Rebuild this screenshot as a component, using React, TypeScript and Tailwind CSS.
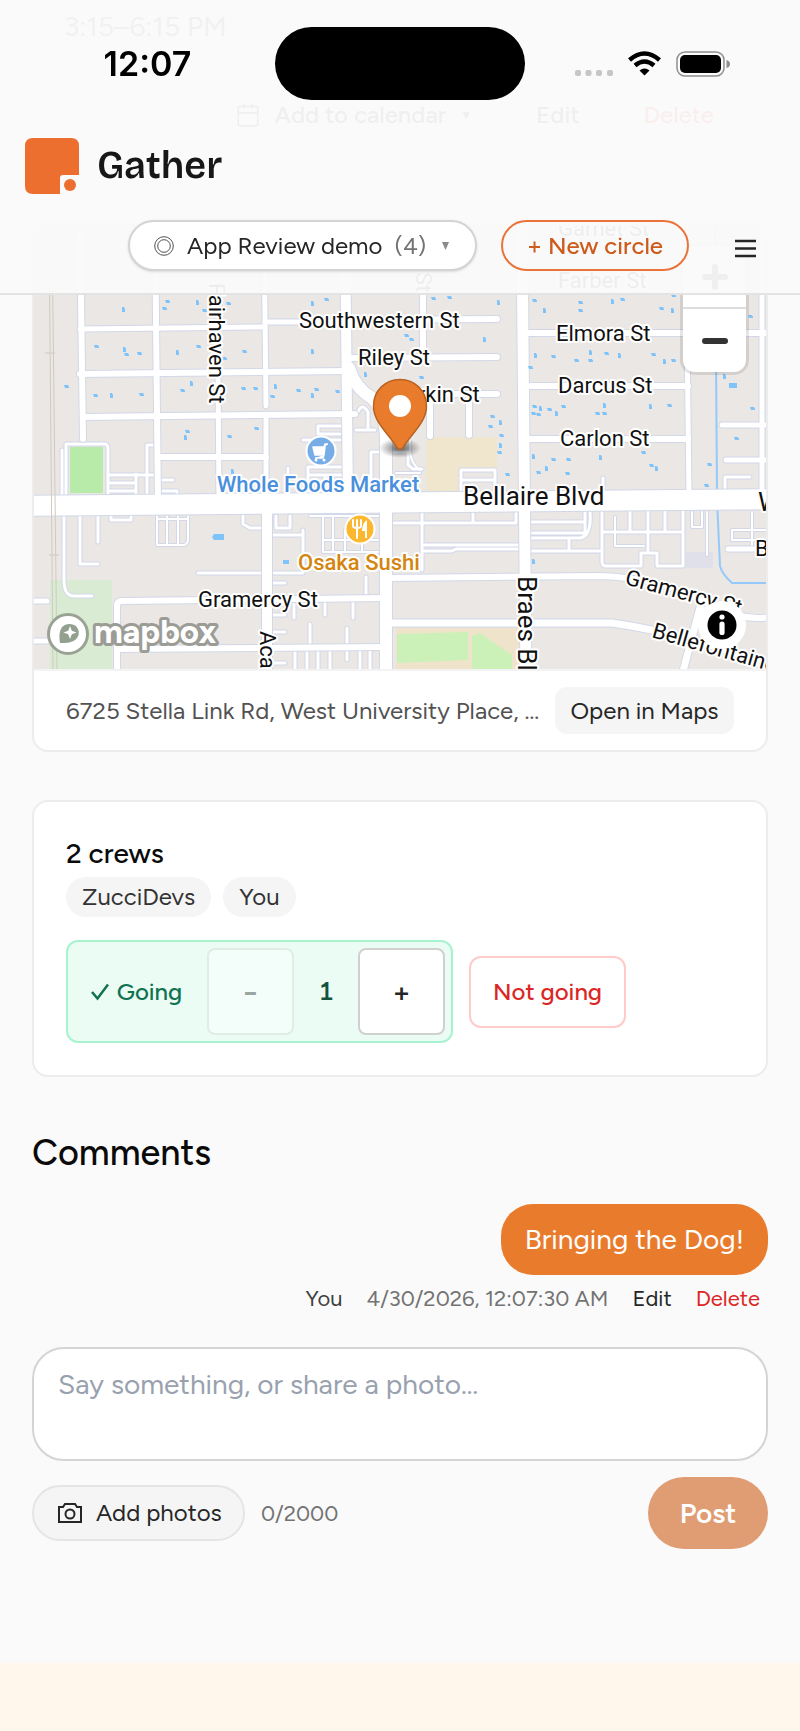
import React, { useState } from "react";
import { Calendar } from "lucide-react";

interface MapLabel {
  text: string;
  x: number;
  y: number;
  size?: number;
  rotate?: number;
  color?: string;
}

interface Road {
  d: string;
  w: number;
}

const MAX_LENGTH = 2000;

const roads: Road[] = [
  { d: "M80 226L83 439", w: 6 },
  { d: "M155 226L158 505", w: 6 },
  { d: "M218 373L219 505", w: 5 },
  { d: "M264 226L266 406", w: 5 },
  { d: "M266 416V505", w: 5 },
  { d: "M345 226L348 500", w: 10 },
  { d: "M80 329L265 327", w: 5 },
  { d: "M265 322H345", w: 5 },
  { d: "M80 374L345 371", w: 6 },
  { d: "M83 417L355 414", w: 6 },
  { d: "M158 457H266", w: 6 },
  { d: "M345 320L497 319", w: 6 },
  { d: "M348 358L497 357", w: 6 },
  { d: "M420 394H497", w: 6 },
  { d: "M423 226V357", w: 6 },
  { d: "M430 394V436", w: 6 },
  { d: "M469 394V435", w: 6 },
  { d: "M349 368Q355 388 372 398Q386 412 386 440V680", w: 12 },
  { d: "M522 226L526 680", w: 11 },
  { d: "M523 333H770", w: 6 },
  { d: "M523 386H688", w: 6 },
  { d: "M523 439H688", w: 6 },
  { d: "M687 333L689 495", w: 5 },
  { d: "M762 226V495", w: 5 },
  { d: "M722 425H766", w: 5 },
  { d: "M726 460H766", w: 5 },
  { d: "M267 510V680", w: 10 },
  { d: "M117 680V606Q117 601 122 601L386 598", w: 6 },
  { d: "M117 649L386 647", w: 6 },
  { d: "M30 601H47", w: 5 },
  { d: "M30 641H47", w: 5 },
  { d: "M386 578L600 576Q660 578 700 600T770 617", w: 6 },
  { d: "M386 623H612Q660 630 700 642T770 668", w: 7 },
  { d: "M702 600L682 675", w: 7 },
  { d: "M728 549H766", w: 5 },
  { d: "M20 506L780 499", w: 20 },
];

const lanes: Road[] = [
  { d: "M64 516V580Q64 596 74 596H92", w: 3 },
  { d: "M80 516V564H98", w: 3 },
  { d: "M98 516V542", w: 3 },
  { d: "M111 516V520H131V516", w: 3 },
  { d: "M157 516V545H183Q188 545 188 538V516M167 516V545M178 516V545M157 519H188", w: 2 },
  { d: "M198 573H303M303 530V573M272 535H303M272 583H285M272 615H285M272 632H285M272 663H285", w: 3 },
  { d: "M243 516V524L250 528H262M276 516V528H290V516", w: 3 },
  { d: "M294 600V618M325 598V615M353 598V618M366 577V598M310 624V647M347 628V660", w: 3 },
  { d: "M295 649V669M307 649V669M318 649V669M330 649V669M360 649V669M370 649V669", w: 3 },
  { d: "M310 516H380M323 516V552H378M333 516V552M345 530V552M362 530V552M323 540H378", w: 2 },
  { d: "M62 496V450M66 444H105Q108 444 108 450V494M66 444V494", w: 3 },
  { d: "M108 475H155M110 483H136M110 491H136M136 474V494M147 495V445H155", w: 3 },
  { d: "M162 480H173M162 491H177V496", w: 3 },
  { d: "M303 440H340M318 426H345M318 426V434H340M288 468V492", w: 3 },
  { d: "M308 467H345M308 475H345M308 467V492M325 475V492", w: 3 },
  { d: "M356 430H375M358 412Q362 402 368 412V430M371 452V492M371 452H380M390 452H408V465L413 469H422", w: 3 },
  { d: "M410 440Q408 462 420 470M396 473H420", w: 2 },
  { d: "M461 490V470H495V490M461 480H495", w: 3 },
  { d: "M603 478V487M725 488V477H750", w: 3 },
  { d: "M392 523H516M422 511V570M473 511V523M516 511V523M422 545H520M422 551H452L456 549H520", w: 3 },
  { d: "M531 522H585M531 533H585M585 511V533M590 511Q592 536 580 538H531M531 551H600M569 540V551", w: 3 },
  { d: "M602 511V562Q602 566 606 566H641V553H657V566H683V511M648 511V553M630 511V531M665 511V531M602 532H683", w: 3 },
  { d: "M615 517V546H644M692 512V527H702V512M707 512V555M752 512V549M766 530H732V540H766", w: 2 },
];

// backyard pools: x, y pairs
const pools: [number, number][] = [
  [123, 310], [164, 309], [167, 302], [197, 303], [204, 311], [228, 304], [312, 304], [326, 300],
  [96, 347], [124, 350], [126, 355], [139, 354], [177, 353], [198, 347], [244, 352], [312, 352],
  [66, 387], [95, 396], [111, 396], [141, 395], [182, 391], [191, 384], [243, 389], [255, 389],
  [275, 387], [272, 397], [298, 391], [312, 396], [316, 390], [337, 392], [365, 375], [224, 359],
  [187, 432], [185, 438], [229, 437], [256, 429], [232, 472], [433, 299], [449, 298], [498, 303],
  [406, 336], [411, 340], [484, 340], [421, 378], [534, 301], [544, 311], [580, 303], [580, 311],
  [612, 302], [622, 300], [661, 309], [672, 311], [750, 317], [673, 296], [535, 356], [553, 357],
  [576, 361], [590, 353], [590, 361], [606, 354], [619, 356], [653, 355], [673, 361], [664, 362],
  [530, 368], [534, 407], [540, 409], [549, 410], [563, 407], [556, 414], [533, 414], [538, 415],
  [604, 406], [597, 414], [604, 414], [650, 407], [669, 406], [492, 417], [500, 423], [490, 427],
  [501, 436], [500, 446], [499, 453], [507, 475], [533, 457], [553, 460], [568, 460], [546, 469],
  [538, 473], [567, 474], [600, 458], [643, 453], [651, 466], [656, 469], [709, 465], [706, 486],
  [724, 377], [752, 409], [736, 439], [533, 562],
];

const labels: MapLabel[] = [
  { text: "Garnet St", x: 558, y: 236 },
  { text: "Farber St", x: 558, y: 288 },
  { text: "Fairhaven St", x: 209, y: 283, rotate: 90 },
  { text: "Southwestern St", x: 299, y: 328 },
  { text: "Riley St", x: 358, y: 365 },
  { text: "Larkin St", x: 394, y: 402 },
  { text: "Elmora St", x: 556, y: 341 },
  { text: "Darcus St", x: 558, y: 393 },
  { text: "Carlon St", x: 560, y: 446 },
  { text: "Bellaire Blvd", x: 463, y: 505, size: 26 },
  { text: "West", x: 758, y: 511, size: 26 },
  { text: "Bellefontaine", x: 755, y: 556 },
  { text: "Gramercy St", x: 198, y: 607 },
  { text: "Academy St", x: 260, y: 631, rotate: 90 },
  { text: "Braes Blvd", x: 518, y: 576, size: 26, rotate: 90 },
  { text: "St", x: 416, y: 272, rotate: 90 },
  { text: "Gramercy St", x: 624, y: 584, rotate: 15 },
  { text: "Bellefontaine St", x: 651, y: 637, rotate: 16 },
  { text: "Whole Foods Market", x: 217, y: 492, color: "#4a90dd" },
  { text: "Osaka Sushi", x: 298, y: 570, color: "#d4850f" },
];

const Roads: React.FC<{ items: Road[]; casing: number }> = ({ items, casing }) => (
  <g fill="none" strokeLinecap="round" strokeLinejoin="round">
    {items.map((road) => (
      <path key={`c-${road.d}`} d={road.d} stroke="#d2d8e8" strokeWidth={road.w + casing} />
    ))}
    {items.map((road) => (
      <path key={road.d} d={road.d} stroke="#fff" strokeWidth={road.w} />
    ))}
  </g>
);

const MapView: React.FC = () => (
  <svg
    viewBox="34 226 732 443"
    preserveAspectRatio="xMidYMid slice"
    className="block h-full w-full"
    role="img"
    aria-label="Map of the event location"
  >
    <rect x="0" y="200" width="820" height="500" fill="#ebe7e4" />
    <rect x="50" y="580" width="62" height="92" fill="#d9ecd3" />
    <rect x="70" y="447" width="33" height="46" fill="#b8eaa9" />
    <path d="M426 437H497V468H461V491H426Z" fill="#f0e6cd" />
    <rect x="396" y="628" width="124" height="44" fill="#f0e3cb" />
    <path d="M397 634L468 632V660L397 663ZM472 636L480 633L512 655V672H472Z" fill="#cbf1b9" />
    <rect x="686" y="552" width="27" height="16" fill="#dfe0ea" />
    <path d="M715 226L717 490M717 500L720 566Q722 574 732 583H770" fill="none" stroke="#93c9fb" strokeWidth="2" />
    <Roads items={lanes} casing={2} />
    <Roads items={roads} casing={2} />
    <g fill="none" stroke="#cfcac0" strokeWidth="1">
      <path d="M49 226L53 669M52 226L57 669" />
      <path d="M45 353H55M49 555H59" />
    </g>
    <g fill="#7fc3fb">
      {pools.map(([x, y], i) => (
        <path
          key={`${x}-${y}`}
          d={i % 3 === 0 ? `M${x - 1} ${y - 3}h2l1 2v3h-3z` : `M${x - 2} ${y - 2}h4l1 2v1h-4z`}
        />
      ))}
      <path d="M214 534H224V540H214L212 537ZM283 560H289V564H283ZM729 383H737V388H729Z" />
    </g>

    <g fontFamily="Roboto, sans-serif" stroke="#fff" strokeWidth="4" strokeLinejoin="round" paintOrder="stroke">
      {labels.map((label) => (
        <text
          key={`${label.text}-${label.x}`}
          x={label.x}
          y={label.y}
          fontSize={label.size ?? 22}
          fontWeight={label.color ? 500 : 400}
          fill={label.color ?? "#111"}
          transform={label.rotate ? `rotate(${label.rotate} ${label.x} ${label.y})` : undefined}
        >
          {label.text}
        </text>
      ))}
    </g>

    {/* shop */}
    <circle cx="321" cy="451" r="14.5" fill="#76ade6" stroke="#fff" strokeWidth="2" />
    <path d="M328 444h-3l-1 3h-11l2 8h9l1-8M324 455l-1 3h-8" fill="#fff" stroke="#fff" strokeWidth="1.5" strokeLinejoin="round" />
    <circle cx="316" cy="460" r="1.5" fill="#fff" />
    <circle cx="324" cy="460" r="1.5" fill="#fff" />

    {/* restaurant */}
    <circle cx="360" cy="529" r="14.5" fill="#fbb72d" stroke="#fff" strokeWidth="2" />
    <path d="M353 520v6q0 2 4 2v10M361 520v6q0 2-4 2M357 520v8" fill="none" stroke="#fff" strokeWidth="2" strokeLinecap="round" />
    <path d="M367 520q-5 3-5 11h3v7h2z" fill="#fff" />

    {/* pin */}
    <defs>
      <radialGradient id="pin-shadow">
        <stop offset="0" stopColor="#000" stopOpacity="0.6" />
        <stop offset="1" stopColor="#000" stopOpacity="0" />
      </radialGradient>
    </defs>
    <ellipse cx="400" cy="448" rx="21" ry="10" fill="url(#pin-shadow)" />
    <path
      d="M400 379.500C385 379.500 373.500 391 373.500 406C373.500 422 388 433 397 447.500Q400 451 403 447.500C412 433 426.500 422 426.500 406C426.500 391 415 379.500 400 379.500Z"
      fill="#e97c2c"
      stroke="#b9621f"
      strokeWidth="1.5"
    />
    <circle cx="400" cy="406" r="11" fill="#fff" />
  </svg>
);

const StatusBar: React.FC = () => (
  <div className="grid h-[100px] grid-cols-[1fr_250px_1fr] items-end">
    <div className="flex h-[73px] items-center justify-center pl-5 font-[Inter,sans-serif] text-[34px] font-semibold text-black">
      12:07
    </div>
    <div className="h-[73px] rounded-full bg-black" />
    <div className="flex h-[73px] items-center justify-center gap-[15px] pr-5">
      <svg width="38" height="26" viewBox="0 0 38 26" fill="#c6c6c8">
        <rect x="0" y="19" width="6" height="6" rx="2" />
        <rect x="10.500" y="19" width="6" height="6" rx="2" />
        <rect x="21" y="19" width="6" height="6" rx="2" />
        <rect x="32" y="19" width="6" height="6" rx="2" />
      </svg>
      <svg width="33" height="25" viewBox="0 0 33 25">
        <path d="M1.500 9Q16.500-4 31.500 9" fill="none" stroke="#000" strokeWidth="4.500" />
        <path d="M7 14.500Q16.500 6.500 26 14.500" fill="none" stroke="#000" strokeWidth="4.500" />
        <path d="M11.500 19.500Q16.500 15.500 21.500 19.500L16.500 24.500Z" />
      </svg>
      <svg width="55" height="26" viewBox="0 0 55 26">
        <rect x="1" y="1" width="47" height="24" rx="8" fill="none" stroke="#8e8e90" strokeWidth="1.500" />
        <rect x="4" y="4" width="41" height="18" rx="5" />
        <path d="M50.500 9Q54 10 54 13T50.500 17Z" fill="#8e8e90" />
      </svg>
    </div>
  </div>
);

const Header: React.FC = () => (
  <header className="fixed inset-x-0 top-0 z-20 h-[295px] border-b-2 border-[#e3e3e3] bg-[#fafafa]/95">
    <StatusBar />
    <a href="#home" className="mt-[37px] ml-[25px] flex h-[58px] w-fit items-center gap-[18px]">
      <svg width="54" height="56" viewBox="0 0 54 56" fill="#ed6f2f">
        <path d="M8 0H46Q54 0 54 8V37H38Q35 37 35 40V56H8Q0 56 0 48V8Q0 0 8 0Z" />
        <circle cx="45" cy="47" r="6" />
      </svg>
      <span className="font-['Bricolage_Grotesque',Inter,sans-serif] text-[38px] leading-[56px] font-semibold text-[#171717]">
        Gather
      </span>
    </a>
    <div className="mt-[25px] flex items-center justify-end pr-11 text-[24px]">
      <button
        type="button"
        className="flex h-[51px] w-[349px] items-center rounded-full border-2 border-[#d4d4d4] bg-white pl-6 text-[#262626] shadow-sm"
      >
        <svg width="20" height="20" viewBox="0 0 20 20" fill="none" stroke="#525252" strokeWidth="1">
          <circle cx="10" cy="10" r="9.300" />
          <circle cx="10" cy="10" r="6.300" />
        </svg>
        <span className="ml-[13px]">App Review demo</span>
        <span className="ml-3 text-[#737373]">(4)</span>
        <svg className="ml-4" width="7" height="8" viewBox="0 0 7 8" fill="#8a8a8a">
          <path d="M0 0H7L3.500 8Z" />
        </svg>
      </button>
      <button
        type="button"
        className="ml-6 h-[51px] w-[188px] rounded-full border-2 border-[#ea7339] font-medium text-[#cc5b1c]"
      >
        + New circle
      </button>
      <button type="button" aria-label="Menu" className="ml-[46px]">
        <svg width="21" height="24" viewBox="0 0 21 24" stroke="#262626" strokeWidth="2.500">
          <path d="M0 7H21M0 14.500H21M0 22H21" />
        </svg>
      </button>
    </div>
  </header>
);

const EventCard: React.FC = () => (
  <section className="h-44 rounded-b-3xl bg-[#f1f1f1] px-8">
    <p className="pt-2 text-[28px] leading-[36px] text-[#525252]">3:15–6:15 PM</p>
    <div className="mt-[45px] flex justify-end gap-[22px] text-[24px] font-medium text-[#262626]">
      <button type="button" className="flex h-[51px] items-center gap-[14px] rounded-xl bg-white px-[22px]">
        <Calendar size={26} strokeWidth={1.5} />
        Add to calendar
        <span className="text-[12px]">▼</span>
      </button>
      <button type="button" className="h-[51px] rounded-xl bg-white px-5">
        Edit
      </button>
      <button type="button" className="h-[51px] rounded-xl bg-white px-[22px] text-[#dc2626]">
        Delete
      </button>
    </div>
  </section>
);

const LocationCard: React.FC = () => (
  <section className="mt-12 overflow-hidden rounded-2xl border-2 border-[#ececec] bg-white">
    <div className="relative h-[443px]">
      <MapView />
      <div className="absolute top-5 right-5 flex flex-col rounded-xl bg-white shadow-[0_0_0_3px_rgba(0,0,0,0.1)]">
        <button type="button" aria-label="Zoom in" className="flex h-[63px] w-[63px] items-center justify-center border-b-2 border-[#ddd]">
          <svg width="26" height="26" viewBox="0 0 26 26" stroke="#333" strokeWidth="6" strokeLinecap="round">
            <path d="M3 13H23M13 3V23" />
          </svg>
        </button>
        <button type="button" aria-label="Zoom out" className="flex h-[63px] w-[63px] items-center justify-center">
          <svg width="26" height="26" viewBox="0 0 26 26" stroke="#333" strokeWidth="6" strokeLinecap="round">
            <path d="M3 13H23" />
          </svg>
        </button>
      </div>
      <button
        type="button"
        aria-label="Map attribution"
        className="absolute right-5 bottom-5 flex h-12 w-12 items-center justify-center rounded-full bg-white"
      >
        <svg width="30" height="30" viewBox="0 0 30 30">
          <circle cx="15" cy="15" r="14.500" />
          <circle cx="15" cy="7" r="2.600" fill="#fff" />
          <rect x="12.400" y="11.500" width="5.200" height="13.500" rx="2.600" fill="#fff" />
        </svg>
      </button>
      <a href="#mapbox" aria-label="Mapbox" className="absolute bottom-3 left-3">
        <svg width="180" height="46" viewBox="0 0 180 46">
          <circle cx="22" cy="23" r="19.500" fill="#fff" stroke="#9aa296" strokeWidth="3" />
          <path d="M14 32C12 20 15 13 24 13C32 13 35 22 31 27C27 32 20 32 14 32Z" fill="#93a08f" />
          <path d="M24 15L25.800 19.700L30.500 21.500L25.800 23.300L24 28L22.200 23.300L17.500 21.500L22.200 19.700Z" fill="#fff" />
          <text
            x="48"
            y="32"
            fontFamily="Figtree, Lato, sans-serif"
            fontSize="33"
            fontWeight="700"
            fill="#fff"
            stroke="#9c9c97"
            strokeWidth="6"
            strokeLinejoin="round"
            paintOrder="stroke"
          >
            mapbox
          </text>
        </svg>
      </a>
    </div>
    <div className="flex items-center gap-3 border-t-2 border-[#f3f3f3] px-8 py-4">
      <p className="min-w-0 flex-1 truncate text-[24px] leading-[32px] text-[#525252]">
        6725 Stella Link Rd, West University Place, Houston, TX
      </p>
      <button type="button" className="h-[47px] w-[179px] rounded-xl bg-[#f5f5f5] text-[24px] text-[#262626]">
        Open in Maps
      </button>
    </div>
  </section>
);

const CrewCard: React.FC = () => {
  const [count, setCount] = useState(1);

  return (
    <section className="mt-12 rounded-2xl border-2 border-[#ececec] bg-white px-8 py-8">
      <h2 className="text-[28px] leading-[39px] font-medium text-[#0a0a0a]">2 crews</h2>
      <ul className="mt-1 flex gap-3 text-[24px] leading-[32px] text-[#333]">
        <li className="rounded-full bg-[#f5f5f5] px-4 py-1">ZucciDevs</li>
        <li className="rounded-full bg-[#f5f5f5] px-4 py-1">You</li>
      </ul>
      <div className="mt-[23px] flex items-center gap-4 text-[24px]">
        <div className="flex items-center rounded-xl border-2 border-[#a7f3d0] bg-[#ebfcf5] p-[6px]">
          <span className="flex w-[133px] items-center justify-center gap-2 pr-2 font-medium text-[#0f7250]">
            <svg width="18" height="18" viewBox="0 0 18 18" fill="none" stroke="currentColor" strokeWidth="2.500">
              <path d="M1 9L6.500 15.500L17 1.500" />
            </svg>
            Going
          </span>
          <button
            type="button"
            aria-label="Fewer guests"
            disabled={count <= 1}
            onClick={() => setCount(count - 1)}
            className="h-[87px] w-[87px] rounded-lg border-2 border-[#d4d4d4] bg-white text-[28px] font-bold text-[#262626] disabled:opacity-40"
          >
            −
          </button>
          <span className="w-16 text-center text-[26px] font-semibold text-[#14533d] tabular-nums">{count}</span>
          <button
            type="button"
            aria-label="More guests"
            onClick={() => setCount(count + 1)}
            className="h-[87px] w-[87px] rounded-lg border-2 border-[#d0d0d0] bg-white text-[28px] font-semibold text-[#262626]"
          >
            +
          </button>
        </div>
        <button type="button" className="h-[72px] w-[157px] rounded-xl border-2 border-[#fecaca] bg-white font-medium text-[#dc2626]">
          Not going
        </button>
      </div>
    </section>
  );
};

const Comments: React.FC = () => {
  const [comment, setComment] = useState("");

  return (
    <section className="mt-12">
      <h2 className="text-[36px] leading-[55px] font-medium text-[#0a0a0a]">Comments</h2>
      <div className="mt-6 flex flex-col items-end">
        <p className="rounded-[32px] bg-[#e97c2c] px-6 py-4 text-[28px] leading-[39px] text-white">
          Bringing the Dog!
        </p>
        <div className="mt-2 flex gap-6 pr-2 text-[22px] leading-[32px] text-[#262626]">
          <span className="text-[#404040]">You</span>
          <time className="text-[#737373]">4/30/2026, 12:07:30 AM</time>
          <button type="button">Edit</button>
          <button type="button" className="text-[#dc2626]">
            Delete
          </button>
        </div>
      </div>
      <form className="mt-8" onSubmit={(e) => e.preventDefault()}>
        <textarea
          aria-label="Comment"
          value={comment}
          maxLength={MAX_LENGTH}
          placeholder="Say something, or share a photo…"
          onChange={(e) => setComment(e.target.value)}
          className="block h-[114px] w-full resize-none rounded-[32px] border-2 border-[#d4d4d4] bg-white px-6 py-4 text-[28px] leading-[39px] placeholder-[#99a1af] focus:outline-none"
        />
        <div className="mt-4 flex items-center">
          <button
            type="button"
            className="flex h-[56px] w-[213px] items-center gap-[14px] rounded-full border-2 border-[#e5e5e5] bg-[#f5f5f5] pl-6 text-[24px] text-[#262626]"
          >
            <svg width="24" height="20" viewBox="0 0 24 20" fill="none" stroke="currentColor" strokeWidth="2">
              <path d="M1 4H5L7 1H17L19 4H23V19H1Z" />
              <circle cx="12" cy="11" r="4.500" />
            </svg>
            Add photos
          </button>
          <span className="ml-4 text-[22px] text-[#737373]">
            {comment.length}/{MAX_LENGTH}
          </span>
          <button
            type="submit"
            disabled={!comment}
            className="ml-auto h-[72px] w-[120px] rounded-full bg-[#e97c2c] text-[28px] font-semibold text-white disabled:bg-[#e09d74]"
          >
            Post
          </button>
        </div>
      </form>
    </section>
  );
};

const App: React.FC = () => {
  return (
    <div className="flex min-h-screen flex-col bg-[#fff6ec] font-[Figtree,Lato,sans-serif]">
      <Header />
      <main className="bg-[#fafafa] px-8 pb-[114px]">
        <EventCard />
        <LocationCard />
        <CrewCard />
        <Comments />
      </main>
    </div>
  );
};

export default App;
